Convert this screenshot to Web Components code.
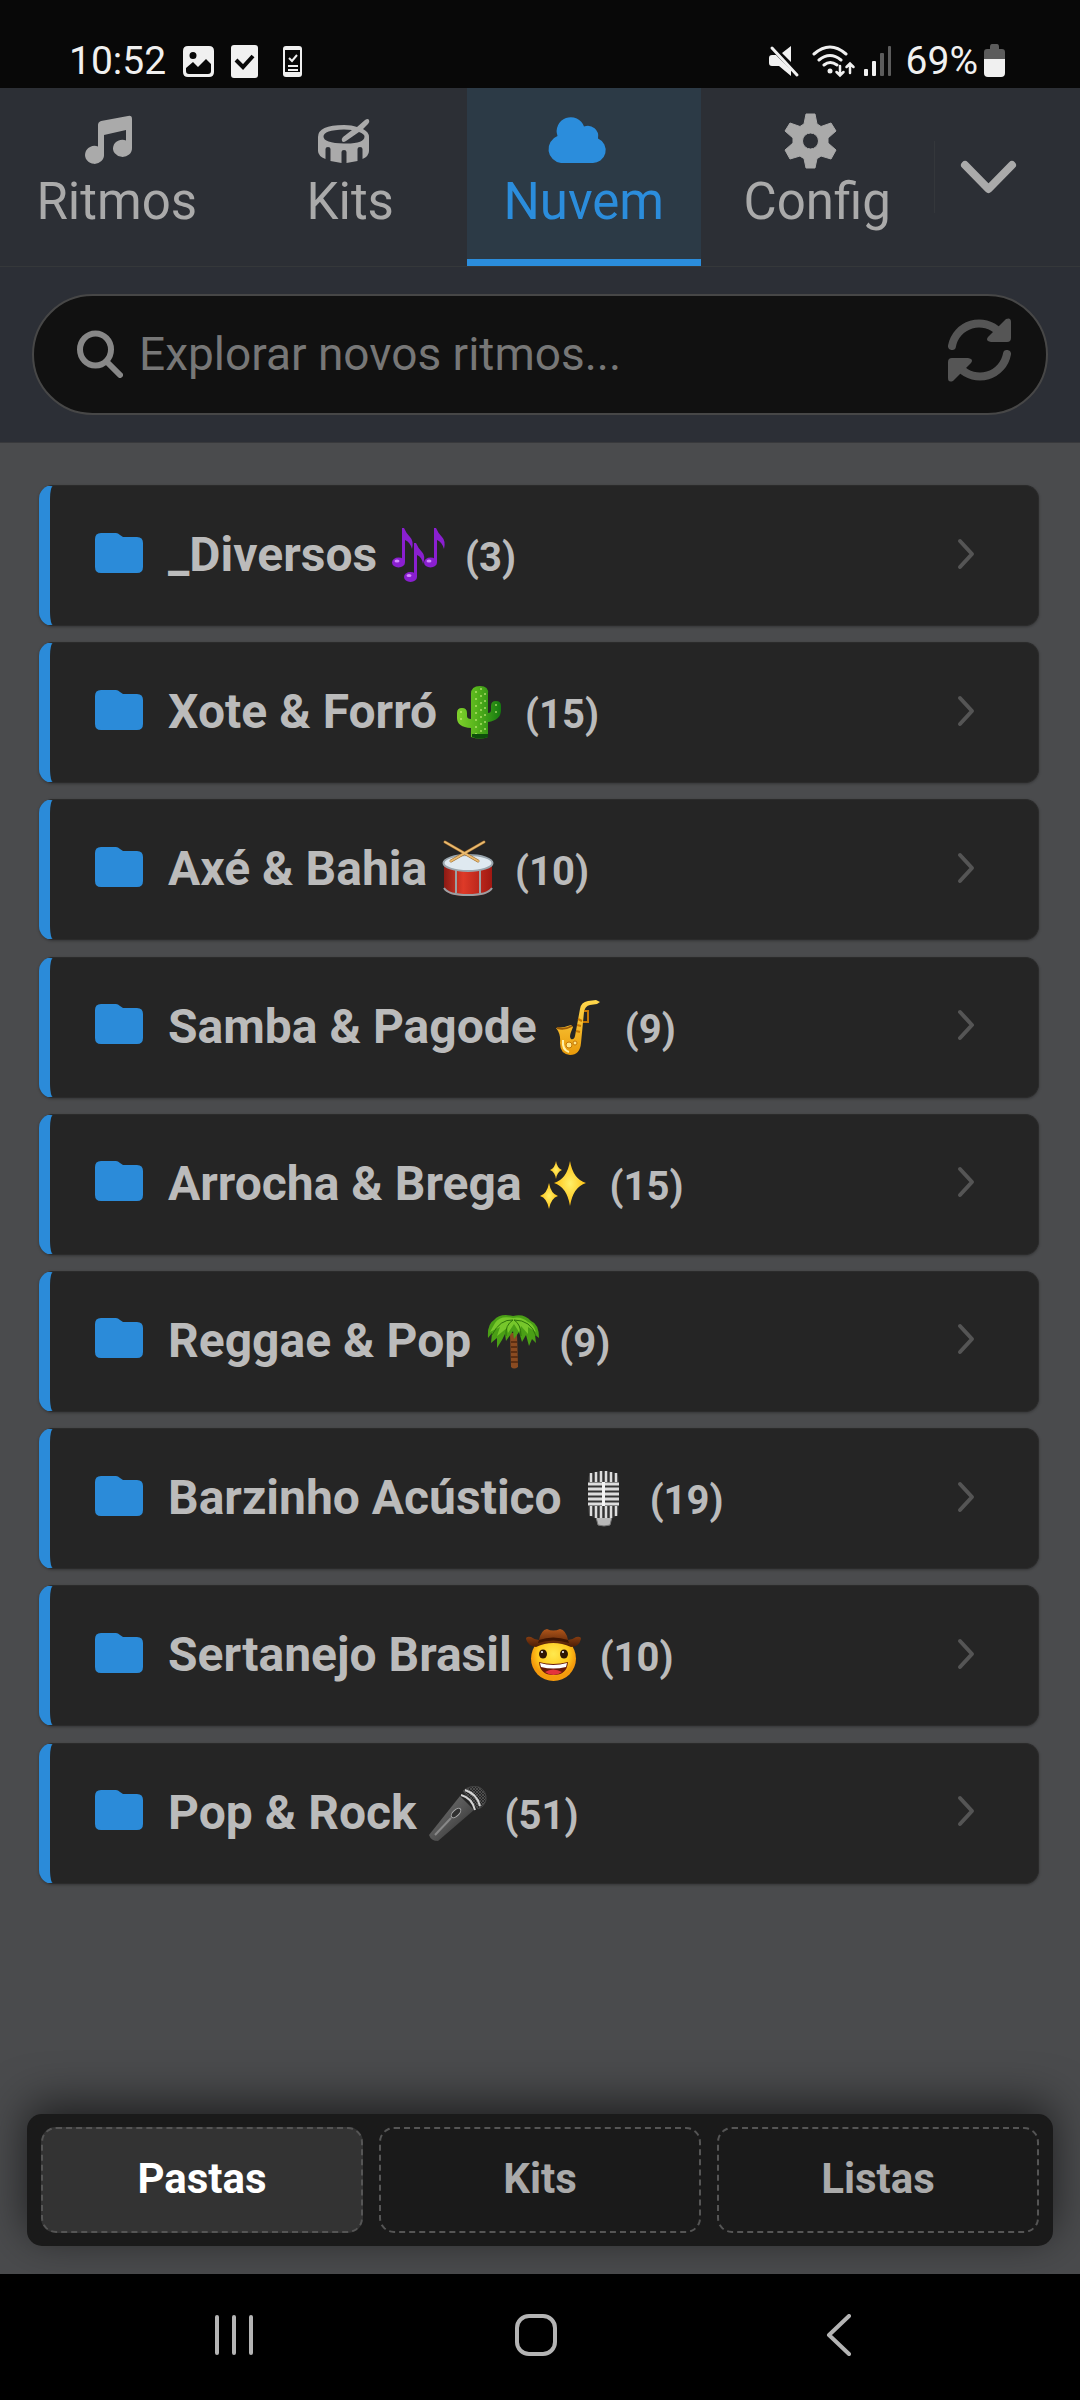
<!DOCTYPE html>
<html lang="pt-BR">
<head>
<meta charset="utf-8">
<meta name="viewport" content="width=device-width, initial-scale=1">
<title>Nuvem</title>
<style>
  body {
    margin: 0;
    min-height: 100vh;
    display: flex;
    flex-direction: column;
    background-color: #4a4b4d;
    font-family: Roboto, "Liberation Sans", sans-serif;
  }

  main {
    flex: 1;
    display: flex;
    flex-direction: column;
    gap: 1.5vw;
    padding: 42px 41px 41px 39px;
  }
</style>
</head>
<body>
  <status-bar time="10:52" battery="69%"></status-bar>
  <tab-bar>
    <tab-item icon="music">Ritmos</tab-item>
    <tab-item icon="drum">Kits</tab-item>
    <tab-item icon="cloud" active>Nuvem</tab-item>
    <tab-item icon="gear">Config</tab-item>
  </tab-bar>
  <search-box placeholder="Explorar novos ritmos..."></search-box>
  <main>
    <folder-card emoji="notes" count="3">_Diversos</folder-card>
    <folder-card emoji="cactus" count="15">Xote &amp; Forró</folder-card>
    <folder-card emoji="snare" count="10">Axé &amp; Bahia</folder-card>
    <folder-card emoji="sax" count="9">Samba &amp; Pagode</folder-card>
    <folder-card emoji="sparkles" count="15">Arrocha &amp; Brega</folder-card>
    <folder-card emoji="palm" count="9">Reggae &amp; Pop</folder-card>
    <folder-card emoji="studio" count="19">Barzinho Acústico</folder-card>
    <folder-card emoji="cowboy" count="10">Sertanejo Brasil</folder-card>
    <folder-card emoji="mic" count="51">Pop &amp; Rock</folder-card>
  </main>
  <view-switch>
    <view-option active>Pastas</view-option>
    <view-option>Kits</view-option>
    <view-option>Listas</view-option>
  </view-switch>
  <system-nav></system-nav>

<script>
// Tab icons, 56x56
const icons = {
  music: `<path fill="currentColor" d="M17 13Q17 10 20 9L47 4Q51 3 51 7V36A9.500 8.500 0 1 1 45 28.500V18L23 23V42A9.500 9 0 1 1 17 34.500Z"/>`,
  drum: `<path fill="currentColor" fill-rule="evenodd" d="M29 13Q37 13 42 15L50 8Q53 6 54 8T53 12L48 17Q54 20 54 25V39Q54 44 47.500 47V37Q47.500 35 45 35T42.500 37V49L31.500 51V40Q31.500 38 29 38T26.500 40V51L15.500 49V37Q15.500 35 13 35T10.500 37V47Q3 44 3 39V25Q3 13 29 13ZM29 17.500Q8.500 18 8.500 24.500T29 31.500T49.500 24.500Q49.500 22 44 20L31 29Q28 31 27 29T28 25L37 18Q33 17.500 29 17.500Z"/>`,
  cloud: `<path fill="currentColor" d="M13 51A14 14 0 0 1 9.500 24A14 14 0 0 1 36 14.500A10.500 10.500 0 0 1 50 26.500A12.800 12.800 0 0 1 44 51Z"/>`,
  gear: `<path fill="currentColor" fill-rule="evenodd" d="M24 2H33L35 12Q37 13 39 14.500L49 11L54 19L46 26V31L54 38L49 47L39 44Q37 45.500 35 46.500L33 56H24L22 46.500Q20 45.500 18 44L8 47L3 38L11 31V26L3 19L8 11L18 14.500Q20 13 22 12ZM28.500 21A8 8 0 1 0 28.500 37A8 8 0 1 0 28.500 21Z" stroke="currentColor" stroke-width="1" stroke-linejoin="round"/>`
};

// Folder pictures, 60x60
const emojis = {
  notes: `
    <g fill="#8a1fd0">
      <ellipse cx="9.500" cy="37.500" rx="6.500" ry="5"/><ellipse cx="21.500" cy="52" rx="6.500" ry="5"/><ellipse cx="41.500" cy="37.500" rx="6.500" ry="5"/>
      <path d="M13 37V3H15Q17 8 21 12T23 24Q21 17 16 15V37ZM25 52V18H27Q29 23 33 27T34 39Q33 32 28 30V52ZM45 37V3H47Q49 8 53 12T55 24Q53 17 48 15V37Z"/>
    </g>
    <g fill="#d48bff"><ellipse cx="8" cy="36" rx="2.500" ry="1.500"/><ellipse cx="20" cy="50.500" rx="2.500" ry="1.500"/><ellipse cx="40" cy="36" rx="2.500" ry="1.500"/></g>`,
  cactus: `
    <defs><linearGradient id="cg"><stop offset="0" stop-color="#7fd02c"/><stop offset=".45" stop-color="#55b31b"/><stop offset="1" stop-color="#157a10"/></linearGradient></defs>
    <path fill="url(#cg)" d="M22 55V46Q8 45 8 36V31Q8 26 13 26T18 31V34Q18 37 22 37V12Q22 4 31 4T39 12V31Q42 31 42 28V24Q42 19 47 19T52 24V28Q52 38 39 40V55Q31 58 22 55Z"/>
    <path d="M27 9V52M32 6V54M36 11V50M12 29V39M47 22V32" stroke="#d9f58a" stroke-width="1" stroke-dasharray="2 5" fill="none"/>
    <path d="M23 52H39V55Q31 58 23 55Z" fill="#0d4f0b"/>`,
  snare: `
    <defs><linearGradient id="dg"><stop offset="0" stop-color="#8c1a14"/><stop offset=".4" stop-color="#de3a28"/><stop offset="1" stop-color="#a01812"/></linearGradient></defs>
    <path fill="url(#dg)" d="M5 24V50Q9 57 29 57T53 50V24Z"/>
    <path d="M5 49Q9 56 29 56T53 49M17 30V54M41 30V54" stroke="#9aa0a4" stroke-width="2" fill="none"/>
    <ellipse cx="29" cy="24" rx="24.500" ry="8" fill="#dfe9f0" stroke="#99a5ad" stroke-width="2"/>
    <path d="M6 3L39 22M45 3L12 22" stroke="#9e6b2c" stroke-width="3" stroke-linecap="round"/>
    <path d="M6 3L39 22M45 3L12 22" stroke="#eabb70" stroke-width="2" stroke-linecap="round"/>`,
  sax: `
    <defs><linearGradient id="sg" x2="0" y2="1"><stop offset="0" stop-color="#ffd84c"/><stop offset="1" stop-color="#e99a0a"/></linearGradient></defs>
    <path fill="url(#sg)" d="M7 31Q15 31 22 28L24 30L22 35Q20 40 22 42Q25 43 26 39L31 12Q32 5 39 4L47 3L51 5L48 7L41 8Q36 9 35 15L32 46Q31 58 21 58Q11 57 11 46Q12 37 7 31Z"/>
    <path d="M35 14H39V25H34M29 22L33 24M28 28L32 29M27 34L31 35" fill="none" stroke="#c57805" stroke-width="2"/>
    <path d="M8 31Q16 33 23 29" stroke="#9b5a08" stroke-width="2" fill="none"/>
    <circle cx="20" cy="48" r="3" fill="#ffe88a" stroke="#c57805"/><circle cx="26" cy="46" r="2" fill="#ffe88a" stroke="#c57805"/>
    <path d="M14 43Q13 53 20 55" stroke="#fff2a8" stroke-width="2" fill="none"/>`,
  sparkles: `
    <defs><radialGradient id="kg"><stop offset="0" stop-color="#fff06a"/><stop offset="1" stop-color="#fdbf10"/></radialGradient></defs>
    <g fill="url(#kg)">
      <path d="M36 7Q39 25 52 29Q39 33 36 52Q33 33 20 29Q33 25 36 7Z"/>
      <path d="M15 29Q17 40 24 42Q17 44 15 55Q13 44 6 42Q13 40 15 29Z"/>
      <path d="M22 7Q23 14 28 16Q23 18 22 25Q21 18 16 16Q21 14 22 7Z"/>
    </g>`,
  palm: `
    <path d="M27 22H34L35 56Q31 59 28 56Z" fill="#8a4b21"/>
    <path d="M28 31H34M28 36H34M28 41H34M28 46H35M28 51H35" stroke="#5e2f12" stroke-width="2"/>
    <path fill="#4a9f16" d="M30 5Q17 2 11 9Q4 13 5 27L9 22L8 32L14 27V37L19 29L22 23L23 30L30 20L31 28L36 21L39 31L43 24L46 35L49 28L53 32L52 24L56 27Q56 13 48 10Q41 2 30 5Z"/>
    <path fill="#76c72b" d="M30 7Q17 4 12 12L7 21L17 16L14 25L24 17L25 22L31 13L36 21L38 15L45 23V16L53 21Q50 12 45 11Q38 5 30 7Z"/>
    <path d="M30 9Q17 8 9 24M30 9Q22 14 23 25M31 9Q38 13 38 25M31 9Q48 9 53 25" stroke="#2d730a" fill="none"/>`,
  studio: `
    <path d="M22 49H38L36 57Q30 59 24 57Z" fill="#b9b9b9" stroke="#777"/>
    <path d="M14 11Q14 3 29.500 3T45 11V42Q45 49 38 50H21Q14 49 14 42Z" fill="#333"/>
    <path d="M17 5V14M22 4V14M27 3V14M32 3V14M37 4V14M42 5V14M17 38V48M22 38V50M27 38V50M32 38V50M37 38V50M42 38V48" stroke="#ddd" stroke-width="2.500"/>
    <path d="M14 16H45M14 21H45M14 26H45M14 31H45M14 36H45" stroke="#ddd" stroke-width="3"/>
    <path d="M29.500 14V38" stroke="#f4f4f4" stroke-width="3"/>`,
  cowboy: `
    <defs>
      <radialGradient id="fg" cy=".4"><stop offset="0" stop-color="#ffe94e"/><stop offset=".7" stop-color="#ffc81c"/><stop offset="1" stop-color="#f49a0c"/></radialGradient>
      <linearGradient id="hg" x2="0" y2="1"><stop offset="0" stop-color="#b0561a"/><stop offset="1" stop-color="#4c1c05"/></linearGradient>
    </defs>
    <circle cx="29.500" cy="33.500" r="22.500" fill="url(#fg)"/>
    <path fill="url(#hg)" d="M2 14Q2 11 7 12Q11 15 15 15Q17 5 23 4Q29 7 36 4Q42 5 44 15Q48 15 52 12Q57 11 57 14Q55 22 47 22Q29 14 12 22Q4 21 2 14Z"/>
    <path d="M15 15Q29 10 44 15L45 18Q29 13 14 18Z" fill="#3e1503"/>
    <ellipse cx="19" cy="29" rx="4" ry="4.500" fill="#2e1704"/><ellipse cx="40" cy="29" rx="4" ry="4.500" fill="#2e1704"/>
    <circle cx="18" cy="27" r="1" fill="#fff"/><circle cx="39" cy="27" r="1" fill="#fff"/>
    <path d="M15 37Q29 41 44 37Q43 50 29.500 50T15 37Z" fill="#681a08"/>
    <path d="M16 38Q29 42 43 38L42 42Q29 45 17 42Z" fill="#fff"/>
    <path d="M21 47Q29 42 38 47Q34 50 29.500 50T21 47Z" fill="#e4343c"/>`,
  mic: `
    <defs>
      <linearGradient id="mg" x2="1" y2="1"><stop offset="0" stop-color="#777"/><stop offset=".5" stop-color="#555"/><stop offset="1" stop-color="#252525"/></linearGradient>
      <pattern id="mesh" width="3" height="3" patternUnits="userSpaceOnUse"><rect width="3" height="3" fill="#262626"/><path d="M0 0L3 3M3 0L0 3" stroke="#666" stroke-width=".6"/></pattern>
    </defs>
    <path fill="url(#mg)" d="M0 52L31 13L45 27L9 58Q2 58 0 52Z"/>
    <path fill="url(#mesh)" stroke="#444" d="M34 8Q40 2 50 4Q58 8 57 17Q55 24 49 26Z"/>
    <path d="M32 12Q43 15 46 27M36 7Q48 11 51 23" stroke="#d4d4d4" stroke-width="2" fill="none"/>
    <ellipse cx="27" cy="30" rx="6" ry="3" transform="rotate(-44 27 30)" fill="#303030" stroke="#aaa"/>
    <path d="M6 52L22 35" stroke="#888" stroke-width="2"/>`
};

class StatusBar extends HTMLElement {
  constructor() {
    super();
    this.attachShadow({ mode: 'open' });
  }

  connectedCallback() {
    this.shadowRoot.innerHTML = `
      <style>
        :host {
          display: flex;
          justify-content: space-between;
          align-items: center;
          box-sizing: border-box;
          height: 88px;
          padding: 34px 75px 0 69px;
          background-color: #080808;
          color: #f0f0f0;
          font-size: 39px;
          line-height: 46px;
        }

        div {
          display: flex;
          align-items: center;
        }

        .left { gap: 17px; }
        .right { gap: 6px; }
      </style>
      <div class="left">
        <span>${this.getAttribute('time')}</span>
        <svg width="31" height="34"><path fill="currentColor" fill-rule="evenodd" d="M5 2H26Q31 2 31 7V28Q31 33 26 33H5Q0 33 0 28V7Q0 2 5 2ZM10 8A3.500 3.500 0 1 0 10 15A3.500 3.500 0 1 0 10 8ZM3 24V27Q3 30 6 30H25Q28 30 28 27V20L23 15L15 23L10 18Z"/></svg>
        <svg width="27" height="34"><rect y="1" width="27" height="33" rx="3" fill="currentColor"/><path d="M5 16L12 23L22 12" stroke="#080808" stroke-width="4" fill="none"/></svg>
        <svg width="34" height="34"><rect x="8" y="2" width="19" height="31" rx="3" fill="currentColor"/><path fill="#080808" d="M10 6H25V28H10Z"/><path d="M14 14L17 17L22 11M13 22H23M13 26H23" stroke="currentColor" stroke-width="2" fill="none"/></svg>
      </div>
      <div class="right">
        <svg width="36" height="34"><path fill="currentColor" d="M1 14Q1 11 4 11H8L23 26V32L11 22H4Q1 22 1 19ZM14 9L23 2V18Z"/><path d="M4 4L29 31" stroke="currentColor" stroke-width="3" stroke-linecap="round"/></svg>
        <svg width="48" height="34"><g fill="none" stroke="currentColor" stroke-width="3" stroke-linecap="round"><path d="M4 10Q20 -4 36 10M9 16Q20 7 31 16M14 21Q20 16 27 21"/><path d="M30 22V31M26.500 28L30 31.500L33.500 28M40 29V20M36.500 23L40 19.500L43.500 23" stroke-width="2.500"/></g><circle cx="20" cy="27" r="2.500" fill="currentColor"/></svg>
        <svg width="36" height="34" fill="currentColor"><rect y="25" width="4" height="7" rx="1"/><rect x="8" y="17" width="4" height="15" rx="1"/><rect x="16" y="9" width="4" height="23" rx="1" fill="#5c5c5c"/><rect x="24" y="2" width="3" height="30" rx="1" fill="#5c5c5c"/></svg>
        <span>${this.getAttribute('battery')}</span>
        <svg width="21" height="34"><path fill="#5c5c5c" d="M6 3Q6 0 8 0H13Q15 0 15 3V5H18Q21 5 21 8V16H0V8Q0 5 3 5H6Z"/><path fill="currentColor" d="M0 15H21V29Q21 33 17 33H4Q0 33 0 29Z"/></svg>
      </div>
    `;
  }
}

customElements.define('status-bar', StatusBar);

const tabBarTemplate = document.createElement('template');
tabBarTemplate.innerHTML = `
  <style>
    :host {
      display: block;
      background-color: #2c2f35;
      border-bottom: 1px solid #35383a;
    }

    nav {
      display: flex;
      height: 178px;
    }

    .more {
      display: flex;
      align-items: center;
      flex: 0 0 146px;
      padding: 0;
      border: none;
      background: none;
      color: #aaa;
      cursor: pointer;
    }

    .more::before {
      content: "";
      width: 1px;
      height: 72px;
      background-color: #34373b;
    }

    .more svg {
      margin-left: 24px;
    }
  </style>
  <nav>
    <slot></slot>
    <button class="more" aria-label="Mais">
      <svg width="60" height="60"><path d="M6 18L29.500 42L53 18" fill="none" stroke="currentColor" stroke-width="8" stroke-linecap="round" stroke-linejoin="round"/></svg>
    </button>
  </nav>
`;

class TabBar extends HTMLElement {
  constructor() {
    super();
    const shadow = this.attachShadow({ mode: 'open' });
    shadow.append(tabBarTemplate.content.cloneNode(true));
  }
}

customElements.define('tab-bar', TabBar);

class TabItem extends HTMLElement {
  constructor() {
    super();
    this.attachShadow({ mode: 'open' });
  }

  connectedCallback() {
    this.shadowRoot.innerHTML = `
      <style>
        :host {
          display: flex;
          flex: 1 1 0;
        }

        button {
          display: flex;
          flex-direction: column;
          align-items: center;
          gap: 5px;
          flex: 1;
          padding: 24px 0 0;
          border: none;
          border-bottom: 7px solid transparent;
          background: none;
          color: #aaa;
          font: 51px/58px Roboto, sans-serif;
          cursor: pointer;
        }

        :host([active]) button {
          background-color: #2c3a46;
          border-bottom-color: #2b8ddc;
          color: #2b8ddc;
        }

        svg {
          flex: none;
          margin-right: 15px;
          overflow: visible;
        }
      </style>
      <button>
        <svg width="56" height="56">${icons[this.getAttribute('icon')]}</svg>
        <span><slot></slot></span>
      </button>
    `;
  }
}

customElements.define('tab-item', TabItem);

class SearchBox extends HTMLElement {
  constructor() {
    super();
    this.attachShadow({ mode: 'open' });
  }

  connectedCallback() {
    this.shadowRoot.innerHTML = `
      <style>
        :host {
          display: block;
          padding: 27px 32px;
          background-color: #2c2f36;
          border-bottom: 1px solid #38393c;
        }

        form {
          display: flex;
          align-items: center;
          box-sizing: border-box;
          height: 121px;
          padding: 0 35px 2px 43px;
          border: 2px solid #474747;
          border-radius: 61px;
          background-color: #111;
        }

        svg {
          display: block;
        }

        input {
          flex: 1;
          min-width: 0;
          padding: 0 16px;
          border: none;
          outline: none;
          background: none;
          color: #ccc;
          font: 46px/54px Roboto, sans-serif;
        }

        input::placeholder {
          color: #777;
          opacity: 1;
        }

        button {
          padding: 0 0 8px;
          border: none;
          background: none;
          color: #555;
          cursor: pointer;
        }
      </style>
      <form>
        <label for="q" aria-label="Buscar">
          <svg width="46" height="48"><g fill="none" stroke="#888" stroke-width="6"><ellipse cx="18.500" cy="19.500" rx="15.500" ry="16"/><path d="M30 32L43 45" stroke-linecap="round"/></g></svg>
        </label>
        <input id="q" type="text" placeholder="${this.getAttribute('placeholder')}">
        <button type="button" aria-label="Atualizar">
          <svg width="63" height="64">
            <path d="M4 28A27.500 27.500 0 0 1 51 14M59 36A27.500 27.500 0 0 1 12 50" fill="none" stroke="currentColor" stroke-width="8" stroke-linecap="round"/>
            <path fill="currentColor" d="M58 1Q63 -1 63 4V20Q63 24 59 24H43Q37 23 40 19ZM5 63Q0 65 0 60V44Q0 40 4 40H20Q26 41 23 45Z"/>
          </svg>
        </button>
      </form>
    `;
  }
}

customElements.define('search-box', SearchBox);

class FolderCard extends HTMLElement {
  constructor() {
    super();
    this.attachShadow({ mode: 'open' });
  }

  connectedCallback() {
    this.shadowRoot.innerHTML = `
      <style>
        :host {
          display: block;
        }

        a {
          display: flex;
          align-items: center;
          gap: 25px;
          box-sizing: border-box;
          height: 141px;
          padding: 0 63px 0 45px;
          border: 1px solid #2b2b2b;
          border-left: 11px solid #2b8bd9;
          border-radius: 14px;
          background-color: #252525;
          box-shadow: 0 1px 3px rgba(0, 0, 0, .3);
          color: #bbb;
          text-decoration: none;
        }

        svg {
          flex: none;
        }

        .name {
          flex: 1;
          padding-top: 2px;
          font-size: 48px;
          font-weight: 700;
          line-height: 60px;
          white-space: nowrap;
        }

        .name svg {
          vertical-align: -14px;
        }

        .count {
          margin-left: 16px;
          font-size: 40px;
        }
      </style>
      <a href="#">
        <svg width="48" height="48"><path fill="#2b8bd9" d="M6 1H21Q23 1 25 3L28 5H42Q48 5 48 11V35Q48 41 42 41H6Q0 41 0 35V7Q0 1 6 1Z"/></svg>
        <span class="name"><slot></slot> <svg width="60" height="60" aria-hidden="true">${emojis[this.getAttribute('emoji')]}</svg><span class="count">(${this.getAttribute('count')})</span></span>
        <svg width="18" height="36"><path d="M3 3L15 16L3 29" fill="none" stroke="#555" stroke-width="4" stroke-linecap="round" stroke-linejoin="round"/></svg>
      </a>
    `;
  }
}

customElements.define('folder-card', FolderCard);

const switchTemplate = document.createElement('template');
switchTemplate.innerHTML = `
  <style>
    :host {
      display: flex;
      gap: 16px;
      margin: 0 27px 28px;
      padding: 13px 14px;
      border-radius: 15px;
      background-color: #1a1a1a;
      box-shadow: 0 -10px 45px rgba(0, 0, 0, .6);
    }
  </style>
  <slot></slot>
`;

class ViewSwitch extends HTMLElement {
  constructor() {
    super();
    const shadow = this.attachShadow({ mode: 'open' });
    shadow.append(switchTemplate.content.cloneNode(true));
  }
}

customElements.define('view-switch', ViewSwitch);

const optionTemplate = document.createElement('template');
optionTemplate.innerHTML = `
  <style>
    :host {
      display: flex;
      flex: 1 1 0;
    }

    button {
      flex: 1;
      height: 106px;
      padding: 0 0 2px;
      border: 2px dashed #555;
      border-radius: 15px;
      background: none;
      color: #aaa;
      font: 700 42px/50px Roboto, sans-serif;
      cursor: pointer;
    }

    :host([active]) button {
      background-color: #333;
      color: #fff;
    }
  </style>
  <button><slot></slot></button>
`;

class ViewOption extends HTMLElement {
  constructor() {
    super();
    const shadow = this.attachShadow({ mode: 'open' });
    shadow.append(optionTemplate.content.cloneNode(true));
  }
}

customElements.define('view-option', ViewOption);

const navTemplate = document.createElement('template');
navTemplate.innerHTML = `
  <style>
    :host {
      display: grid;
      grid-template-columns: repeat(3, 28vw);
      justify-content: center;
      height: 126px;
      padding-right: 8px;
      background-color: #000;
    }

    button {
      display: flex;
      align-items: center;
      justify-content: center;
      padding: 0 0 4px;
      border: none;
      background: none;
      cursor: pointer;
    }

    svg {
      fill: none;
      stroke: #b4b4b4;
      stroke-width: 4;
      stroke-linecap: round;
      stroke-linejoin: round;
    }
  </style>
  <button aria-label="Recentes"><svg width="42" height="42"><path d="M4 3V39M21 3V39M38 3V39"/></svg></button>
  <button aria-label="Início"><svg width="42" height="42"><rect x="2" y="2" width="38" height="38" rx="12"/></svg></button>
  <button aria-label="Voltar"><svg width="42" height="42"><path d="M32 2L12 21L32 40"/></svg></button>
`;

class SystemNav extends HTMLElement {
  constructor() {
    super();
    const shadow = this.attachShadow({ mode: 'open' });
    shadow.append(navTemplate.content.cloneNode(true));
  }
}

customElements.define('system-nav', SystemNav);
</script>
</body>
</html>
